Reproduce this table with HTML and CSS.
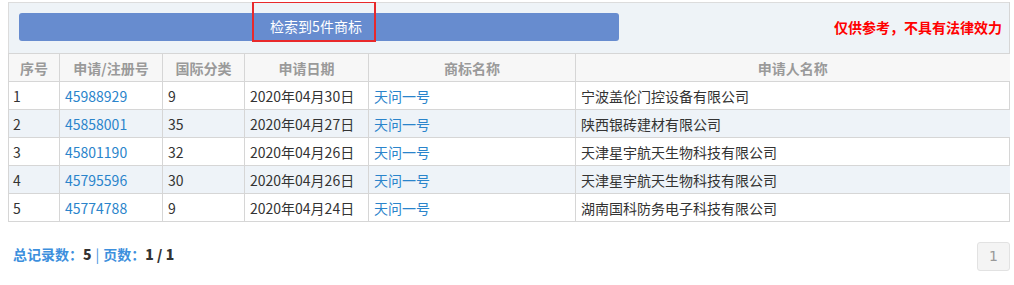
FILE: index.html
```html
<!DOCTYPE html>
<html lang="zh">
<head>
<meta charset="utf-8">
<link rel="stylesheet" href="styles.css">
</head>
<body>
<div class="panel">
  <div class="topbar">
    <div class="result-bar">检索到5件商标</div>
    <div class="notice">仅供参考，不具有法律效力</div>
    <div class="highlight"></div>
  </div>
  <table class="grid">
    <colgroup>
      <col class="c1"><col class="c2"><col class="c3"><col class="c4"><col class="c5"><col class="c6">
    </colgroup>
    <thead>
      <tr><th>序号</th><th>申请/注册号</th><th>国际分类</th><th>申请日期</th><th>商标名称</th><th>申请人名称</th></tr>
    </thead>
    <tbody>
      <tr><td>1</td><td><a href="#">45988929</a></td><td>9</td><td>2020年04月30日</td><td><a href="#">天问一号</a></td><td>宁波盖伦门控设备有限公司</td></tr>
      <tr class="alt"><td>2</td><td><a href="#">45858001</a></td><td>35</td><td>2020年04月27日</td><td><a href="#">天问一号</a></td><td>陕西银砖建材有限公司</td></tr>
      <tr><td>3</td><td><a href="#">45801190</a></td><td>32</td><td>2020年04月26日</td><td><a href="#">天问一号</a></td><td>天津星宇航天生物科技有限公司</td></tr>
      <tr class="alt"><td>4</td><td><a href="#">45795596</a></td><td>30</td><td>2020年04月26日</td><td><a href="#">天问一号</a></td><td>天津星宇航天生物科技有限公司</td></tr>
      <tr><td>5</td><td><a href="#">45774788</a></td><td>9</td><td>2020年04月24日</td><td><a href="#">天问一号</a></td><td>湖南国科防务电子科技有限公司</td></tr>
    </tbody>
  </table>
</div>
<div class="footer">
  <div class="stats"><span class="lbl">总记录数：</span><b>5</b><span class="sep">|</span><span class="lbl">页数：</span><b>1 / 1</b></div>
  <div class="pager"><span class="page">1</span></div>
</div>
</body>
</html>
```
FILE: styles.css
```css
html, body { background: #fff; }
body {
  margin: 2px 0 0 8px;
  font-family: "Microsoft YaHei", "Noto Sans CJK SC", "Noto Sans", sans-serif;
  font-size: 14px;
  color: #333;
}
.panel {
  width: 1002px;
  border-right: 1px solid #d6d6d6;
  box-sizing: border-box;
}
.topbar {
  position: relative;
  height: 51px;
  background: #eef3f7;
  border-top: 1px solid #dcdcdc;
  border-left: 1px solid #dcdcdc;
  display: flex;
  align-items: center;
  justify-content: space-between;
  padding: 0 7px 0 10px;
  box-sizing: border-box;
}
.result-bar {
  width: 600px;
  height: 28px;
  margin-top: -2px;
  background: #678ccf;
  border-radius: 3px;
  color: #fff;
  font-size: 14px;
  line-height: 27px;
  text-align: center;
  text-indent: -6px;
}
.notice {
  color: #ff0000;
  font-weight: bold;
  font-size: 14px;
  line-height: 20px;
  margin-top: -2px;
}
.highlight {
  position: absolute;
  left: 243px;
  top: -2px;
  width: 120px;
  height: 37px;
  border: 2px solid #e8292b;
}
.grid {
  width: 1001px;
  border-collapse: collapse;
  table-layout: fixed;
}
.c1 { width: 51px; }
.c2 { width: 103px; }
.c3 { width: 82px; }
.c4 { width: 124px; }
.c5 { width: 207px; }
.c6 { width: 434px; }
.grid th, .grid td {
  border: 1px solid #d6d6d6;
  height: 27px;
  padding: 0 5px;
  line-height: 20px;
  white-space: nowrap;
}
.grid tr > :last-child { border-right: none; }
.grid th {
  background: #f7f7f7;
  color: #9a9a9a;
  font-weight: bold;
  text-align: center;
}
.grid td { text-align: left; }
.grid td:first-child { padding-left: 4px; }
.grid tr.alt td { background: #eef3f8; }
.grid a { color: #2a84cb; text-decoration: none; }
.footer {
  width: 1002px;
  display: flex;
  justify-content: space-between;
  align-items: center;
  padding-top: 20px;
}
.stats {
  padding-left: 5px;
  font-size: 14px;
  font-weight: bold;
  line-height: 20px;
  margin-top: -6px;
}
.stats .lbl, .stats .sep { color: #3d8fdd; }
.stats b { color: #333; }
.stats .sep { margin: 0 4px; font-weight: normal; }
.page {
  display: block;
  width: 31px;
  height: 27px;
  border: 1px solid #e2e2e2;
  border-radius: 3px;
  background: #f4f4f4;
  color: #999;
  text-align: center;
  line-height: 27px;
  font-size: 14px;
  font-family: "DejaVu Sans", sans-serif;
}
```
